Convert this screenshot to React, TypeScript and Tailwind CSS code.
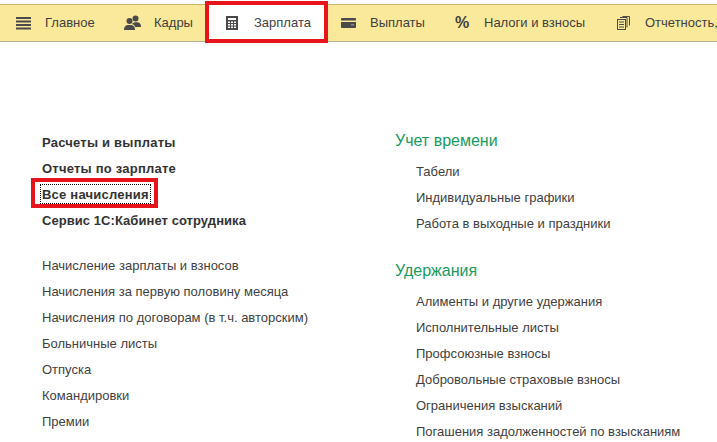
import type { ReactNode } from 'react';

function MenuIcon() {
  return (
    <svg width="15" height="15" viewBox="0 0 15 15" fill="#4a4a4a">
      <rect x="0" y="1" width="15" height="2" />
      <rect x="0" y="4.500" width="15" height="2" />
      <rect x="0" y="8" width="15" height="2" />
      <rect x="0" y="11.500" width="15" height="2" />
    </svg>
  );
}

function PeopleIcon() {
  return (
    <svg width="17" height="16" viewBox="0 0 17 16" fill="#4a4a4a">
      <circle cx="11.500" cy="3.500" r="3" />
      <path d="M8 9c1-2 6-2 7.500-1 1 .7 1.500 2 1.500 4h-6c0-1-1-2.500-3-3z" />
      <circle cx="5.500" cy="6" r="3" />
      <path d="M0 15c0-3 1-5 5.500-5s5.500 2 5.500 5z" />
    </svg>
  );
}

function CalcIcon() {
  return (
    <svg width="12" height="14" viewBox="0 0 12 14">
      <rect width="12" height="14" fill="#4a4a4a" />
      <rect x="2" y="2" width="8" height="2" fill="#fff" />
      {[5.500, 8, 10.500].map((y) =>
        [2, 5, 8].map((x) => <rect key={`${x}-${y}`} x={x} y={y} width="2" height="1.500" fill="#fff" />)
      )}
    </svg>
  );
}

function CardIcon() {
  return (
    <svg width="15" height="12" viewBox="0 0 15 12">
      <rect y="1" width="15" height="10" rx="1" fill="#4a4a4a" />
      <rect y="3.500" width="15" height="1.500" fill="#fbe99b" />
      <rect x="10" y="7" width="3" height="1.500" fill="#8a8a8a" />
    </svg>
  );
}

function DocsIcon() {
  return (
    <svg width="13" height="14" viewBox="0 0 13 14" fill="none" stroke="#4a4a4a">
      <rect x="0.500" y="3.500" width="8" height="10" />
      <path d="M2 6h5M2 8.500h5M2 11h5" />
      <path d="M3 1.500h7v10M5.500.500h7v9" />
    </svg>
  );
}

function Tab({ icon, label, gap, active }: { icon: ReactNode; label: string; gap: string; active?: boolean }) {
  return (
    <div
      className={`flex items-center shrink-0 ${gap} ${
        active ? 'bg-white border-[4px] border-[#e8141c] h-[42px] -mt-[2px] pt-[2px]' : 'h-full'
      }`}
    >
      {icon}
      <span className="whitespace-nowrap">{label}</span>
    </div>
  );
}

function Bold({ children, tight }: { children: ReactNode; tight?: boolean }) {
  return (
    <div className={`h-[26px] leading-[26px] font-bold text-[#333] ${tight ? 'tracking-[0.06px]' : 'tracking-[0.22px]'}`}>
      {children}
    </div>
  );
}

function Item({ children }: { children: ReactNode }) {
  return <div className="h-[26px] leading-[26px] whitespace-nowrap">{children}</div>;
}

function Heading({ children }: { children: ReactNode }) {
  return <div className="h-[24px] leading-[24px] text-[16px] text-[#1a9a5c]">{children}</div>;
}

export default function App() {
  return (
    <div className="w-[717px] h-[442px] overflow-hidden bg-white font-['Liberation_Sans',Arial,sans-serif] text-[13px] text-[#3f3f3f]">
      {/* Top menu */}
      <div className="mt-[4px] h-[38px] bg-[#fbe99b] border-t border-b border-t-[#c8b76a] border-b-[#b5b09a] flex items-center pl-[16px]">
        <Tab icon={<MenuIcon />} label="Главное" gap="gap-[14px] w-[108px]" />
        <Tab icon={<PeopleIcon />} label="Кадры" gap="gap-[13px] w-[81px]" />
        <Tab icon={<CalcIcon />} label="Зарплата" gap="gap-[16px] w-[123px] pl-[17px]" active />
        <Tab icon={<CardIcon />} label="Выплаты" gap="gap-[14px] w-[127px] pl-[13px]" />
        <Tab icon={<span className="w-[14px] text-[16px] font-bold leading-none">%</span>} label="Налоги и взносы" gap="gap-[15px] w-[162px]" />
        <Tab icon={<DocsIcon />} label="Отчетность," gap="gap-[15px]" />
      </div>

      <div className="flex">
        {/* Left column */}
        <div className="w-[395px] pl-[42px] pt-[88px]">
          <Bold>Расчеты и выплаты</Bold>
          <Bold>Отчеты по зарплате</Bold>
          <div className="relative">
            <Bold>Все начисления</Bold>
            <div className="absolute left-[-11px] top-[-4px] w-[127px] h-[30px] border-[4px] border-[#e8141c]">
              <div className="absolute left-[5px] top-[2px] right-[3px] bottom-0 border border-dotted border-black" />
            </div>
          </div>
          <Bold tight>Сервис 1С:Кабинет сотрудника</Bold>
          <div className="mt-[19px]">
            <Item>Начисление зарплаты и взносов</Item>
            <Item>Начисления за первую половину месяца</Item>
            <Item>Начисления по договорам (в т.ч. авторским)</Item>
            <Item>Больничные листы</Item>
            <Item>Отпуска</Item>
            <Item>Командировки</Item>
            <Item>Премии</Item>
          </div>
        </div>

        {/* Right column */}
        <div className="pt-[87px]">
          <Heading>Учет времени</Heading>
          <div className="pl-[21px] mt-[6px]">
            <Item>Табели</Item>
            <Item>Индивидуальные графики</Item>
            <Item>Работа в выходные и праздники</Item>
          </div>
          <div className="mt-[22px]">
            <Heading>Удержания</Heading>
          </div>
          <div className="pl-[21px] mt-[6px]">
            <Item>Алименты и другие удержания</Item>
            <Item>Исполнительные листы</Item>
            <Item>Профсоюзные взносы</Item>
            <Item>Добровольные страховые взносы</Item>
            <Item>Ограничения взысканий</Item>
            <Item>Погашения задолженностей по взысканиям</Item>
          </div>
        </div>
      </div>
    </div>
  );
}
